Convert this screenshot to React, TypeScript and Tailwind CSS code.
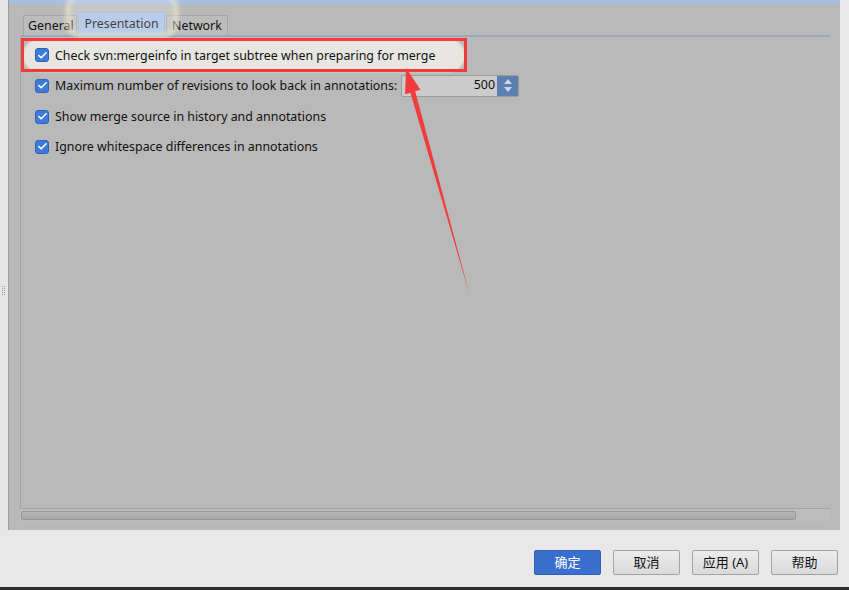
import { Check } from "lucide-react";

const font = { fontFamily: '"Noto Sans", "Noto Sans CJK SC", sans-serif' };

type RowProps = { label: string; className?: string; children?: React.ReactNode };

const Box = () => (
  <div className="flex items-center justify-center w-[14px] h-[14px] rounded-[3px] bg-[#3d7bd9] border border-[#2f63b8] shrink-0">
    <Check size={11} strokeWidth={3.5} className="text-white" />
  </div>
);

const Row = ({ label, className, children }: RowProps) => (
  <div className={`flex items-center pl-[14px] ${className ?? ""}`}>
    <Box />
    <span className="ml-[6px] pt-[2px] text-[12.4px] text-[#111] whitespace-nowrap">{label}</span>
    {children}
  </div>
);

const Btn = ({ label, primary }: { label: string; primary?: boolean }) => (
  <button
    className={
      "w-[67px] h-[25px] rounded-[2px] border text-[13px] flex items-center justify-center " +
      (primary
        ? "bg-[#3a6fd0] border-[#3262b8] text-white"
        : "bg-gradient-to-b from-[#ececec] to-[#d9d9d9] border-[#a3a3a3] text-[#111]")
    }
  >
    {label}
  </button>
);

export default function App() {
  return (
    <div className="relative w-[849px] h-[590px] overflow-hidden bg-[#e8e8e8] flex flex-col" style={font}>
      <div className="flex h-[530px]">
        {/* left grip strip */}
        <div className="w-[8px] bg-[#e6e6e6] flex items-center">
          <div className="ml-[2px] mt-[50px] grid grid-cols-2 gap-[1px]">
            {Array.from({ length: 10 }).map((_, i) => (
              <div key={i} className="w-[1px] h-[1px] bg-[#9a9a9a]" />
            ))}
          </div>
        </div>

        <div className="flex-1 flex flex-col bg-[#b9b9b9] border-l border-[#9c9c9c]">
          <div className="h-[4px] bg-[#a8bfe3]" />

          <div className="flex flex-col flex-1 pl-[11px] pr-[10px]">
            {/* tabs */}
            <div className="flex items-end h-[31px] pl-[3px] gap-[1px] text-[12.4px] text-[#111]">
              <div className="w-[54px] h-[20px] pl-[4px] pt-[2px] flex items-center border border-b-0 border-[#a6a6a6] bg-[#bcbcbc] rounded-t-[2px]">
                General
              </div>
              <div className="w-[87px] h-[23px] flex items-center justify-center bg-[#a8c0e4] border border-b-0 border-[#9eb3d2] rounded-t-[2px]">
                Presentation
              </div>
              <div className="w-[62px] h-[20px] pl-[5px] pt-[2px] flex items-center border border-b-0 border-[#a6a6a6] bg-[#bcbcbc] rounded-t-[2px]">
                Network
              </div>
            </div>
            <div className="h-[2px] bg-[#97a9c0]" />

            {/* content */}
            <div className="flex-1 border-l border-[#a3a3a3] border-b flex flex-col pt-[3px]">
              <div className="h-[30px] flex items-center">
                <div className="ml-[4px] w-[438px] h-[29px] rounded-[14px] bg-[#e7e6e2] shadow-[0_0_2px_2px_#ece7cc] flex items-center pl-[10px]">
                  <Box />
                  <span className="ml-[6px] pt-[2px] text-[12.4px] text-[#111] whitespace-nowrap">
                    Check svn:mergeinfo in target subtree when preparing for merge
                  </span>
                </div>
              </div>
              <div className="h-[31px] flex items-center pl-[14px]">
                <Box />
                <span className="ml-[6px] pt-[2px] w-[342px] text-[12.4px] text-[#111] whitespace-nowrap">
                  Maximum number of revisions to look back in annotations:
                </span>
                <div className="ml-[4px] flex w-[118px] h-[22px] border border-[#9a9a9a] rounded-[2px] bg-[#cbcbcb] overflow-hidden">
                  <div className="flex-1 flex items-center justify-end pr-[2px] text-[12.4px] text-[#111]">500</div>
                  <div className="w-[21px] bg-[#5b7fb1] flex flex-col items-center justify-center gap-[3px]">
                    <div className="w-0 h-0 border-l-[4px] border-r-[4px] border-b-[5px] border-l-transparent border-r-transparent border-b-[#c9d5e8]" />
                    <div className="w-0 h-0 border-l-[4px] border-r-[4px] border-t-[5px] border-l-transparent border-r-transparent border-t-[#c9d5e8]" />
                  </div>
                </div>
              </div>
              <Row label="Show merge source in history and annotations" className="h-[31px]" />
              <Row label="Ignore whitespace differences in annotations" className="h-[29px]" />
            </div>

            {/* scrollbar */}
            <div className="h-[12px] bg-[#bdbdbd] flex items-center pl-[1px]">
              <div className="w-[775px] h-[9px] rounded-[2px] bg-gradient-to-b from-[#b6b6b6] to-[#a8a8a8] border border-[#999]" />
            </div>
            <div className="h-[9px]" />
          </div>
        </div>

        <div className="w-[9px] bg-[#e8e8e8]" />
      </div>

      {/* buttons */}
      <div className="h-[57px] flex justify-end items-start pt-[20px] pr-[11px] gap-[12px]">
        <Btn label="确定" primary />
        <Btn label="取消" />
        <Btn label="应用 (A)" />
        <Btn label="帮助" />
      </div>
      <div className="h-[3px] bg-[#2e2e2e]" />

      {/* annotation overlay */}
      <div className="absolute left-[66px] top-[-8px] w-[112px] h-[46px] rounded-[16px] border-[4px] border-[#efe9c8]/70 bg-white/20 blur-[2px] pointer-events-none" />
      <svg className="absolute left-0 top-0 pointer-events-none" width="849" height="590">
        <rect x="22.5" y="39.5" width="443" height="31" fill="none" stroke="#f23b3b" strokeWidth="3" />
        <polygon
          points="406,68 420.5,89.8 415.2,91.3 470,296 410.4,92.7 405.1,94.2"
          fill="#f23b3b"
        />
      </svg>
    </div>
  );
}
